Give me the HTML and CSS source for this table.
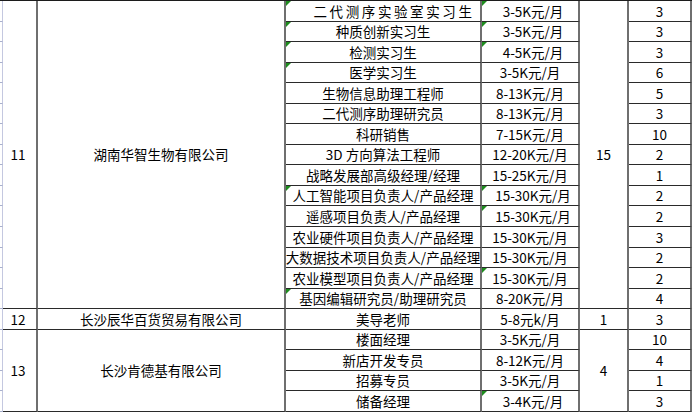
FILE: index.html
```html
<!DOCTYPE html>
<html lang="zh-CN">
<head>
<meta charset="utf-8">
<title>招聘岗位表</title>
<link rel="stylesheet" href="styles.css">
</head>
<body>
<div class="sheet">
  <!-- row 1 -->
  <div class="a"></div>
  <div class="b s15">11</div>
  <div class="c s15">湖南华智生物有限公司</div>
  <div class="d tri wide">二代测序实验室实习生</div>
  <div class="e tri sh">3-5K元/月</div>
  <div class="f s15">15</div>
  <div class="g">3</div>
  <!-- row 2 -->
  <div class="a"></div>
  <div class="d tri">种质创新实习生</div>
  <div class="e tri sh">3-5K元/月</div>
  <div class="g">3</div>
  <!-- row 3 -->
  <div class="a"></div>
  <div class="d tri">检测实习生</div>
  <div class="e tri sh">4-5K元/月</div>
  <div class="g">3</div>
  <!-- row 4 -->
  <div class="a"></div>
  <div class="d tri">医学实习生</div>
  <div class="e">3-5K元/月</div>
  <div class="g">6</div>
  <!-- row 5 -->
  <div class="a"></div>
  <div class="d">生物信息助理工程师</div>
  <div class="e">8-13K元/月</div>
  <div class="g">5</div>
  <!-- row 6 -->
  <div class="a"></div>
  <div class="d">二代测序助理研究员</div>
  <div class="e">8-13K元/月</div>
  <div class="g">3</div>
  <!-- row 7 -->
  <div class="a"></div>
  <div class="d">科研销售</div>
  <div class="e">7-15K元/月</div>
  <div class="g">10</div>
  <!-- row 8 -->
  <div class="a"></div>
  <div class="d">3D 方向算法工程师</div>
  <div class="e">12-20K元/月</div>
  <div class="g">2</div>
  <!-- row 9 -->
  <div class="a"></div>
  <div class="d">战略发展部高级经理/经理</div>
  <div class="e">15-25K元/月</div>
  <div class="g">1</div>
  <!-- row 10 -->
  <div class="a"></div>
  <div class="d tri">人工智能项目负责人/产品经理</div>
  <div class="e tri sh">15-30K元/月</div>
  <div class="g">2</div>
  <!-- row 11 -->
  <div class="a"></div>
  <div class="d">遥感项目负责人/产品经理</div>
  <div class="e tri sh">15-30K元/月</div>
  <div class="g">2</div>
  <!-- row 12 -->
  <div class="a"></div>
  <div class="d">农业硬件项目负责人/产品经理</div>
  <div class="e">15-30K元/月</div>
  <div class="g">3</div>
  <!-- row 13 -->
  <div class="a"></div>
  <div class="d over">大数据技术项目负责人/产品经理</div>
  <div class="e">15-30K元/月</div>
  <div class="g">2</div>
  <!-- row 14 -->
  <div class="a"></div>
  <div class="d">农业模型项目负责人/产品经理</div>
  <div class="e tri">15-30K元/月</div>
  <div class="g">2</div>
  <!-- row 15 -->
  <div class="a"></div>
  <div class="d tri">基因编辑研究员/助理研究员</div>
  <div class="e">8-20K元/月</div>
  <div class="g">4</div>
  <!-- row 16 -->
  <div class="a"></div>
  <div class="b">12</div>
  <div class="c">长沙辰华百货贸易有限公司</div>
  <div class="d">美导老师</div>
  <div class="e">5-8元k/月</div>
  <div class="f">1</div>
  <div class="g">3</div>
  <!-- row 17 -->
  <div class="a"></div>
  <div class="b s4">13</div>
  <div class="c s4">长沙肯德基有限公司</div>
  <div class="d">楼面经理</div>
  <div class="e">3-5K元/月</div>
  <div class="f s4">4</div>
  <div class="g">10</div>
  <!-- row 18 -->
  <div class="a"></div>
  <div class="d">新店开发专员</div>
  <div class="e">8-12K元/月</div>
  <div class="g">4</div>
  <!-- row 19 -->
  <div class="a"></div>
  <div class="d">招募专员</div>
  <div class="e">3-5K元/月</div>
  <div class="g">1</div>
  <!-- row 20 -->
  <div class="a"></div>
  <div class="d">储备经理</div>
  <div class="e tri sh">3-4K元/月</div>
  <div class="g">3</div>
</div>
</body>
</html>
```

FILE: styles.css
```css
html, body {
  margin: 0;
  padding: 0;
  background: #ffffff;
}

.sheet {
  width: 692px;
  height: 412px;
  box-sizing: border-box;
  border-top: 1px solid #1c1c1c;
  display: grid;
  grid-template-columns: 3px 35px 248px 196px 98px 49px 63px;
  grid-template-rows: repeat(20, 1fr);
  font-family: "Noto Sans CJK SC", "Liberation Sans", sans-serif;
  font-size: 13.5px;
  color: #000000;
  overflow: hidden;
}

.sheet > div {
  box-sizing: border-box;
  display: flex;
  align-items: center;
  justify-content: center;
  white-space: nowrap;
  overflow: hidden;
  position: relative;
  line-height: 1;
  padding-top: 1px;
}

.a {
  grid-column: 1;
  border-right: 1px solid #c4c8e0;
  border-bottom: 1px solid #a9b0cc;
}

.b { grid-column: 2; }
.c { grid-column: 3; }
.d { grid-column: 4; }
.e { grid-column: 5; }
.f { grid-column: 6; }
.g { grid-column: 7; }

.b, .c, .d, .e, .f, .g {
  border-right: 2px solid #6f6f6f;
  border-bottom: 1px solid #2a2a2a;
}

.s15 { grid-row-end: span 15; }
.s4 { grid-row-end: span 4; }

.b { padding-right: 3px; }

.wide {
  letter-spacing: 2.6px;
  padding-left: 22px;
}

.sh { padding-left: 6px; }

.over { justify-content: flex-start; }

.tri::before {
  content: "";
  position: absolute;
  top: 0;
  left: 0;
  width: 0;
  height: 0;
  border-top: 5px solid #1e8c1e;
  border-right: 5px solid transparent;
}
```
